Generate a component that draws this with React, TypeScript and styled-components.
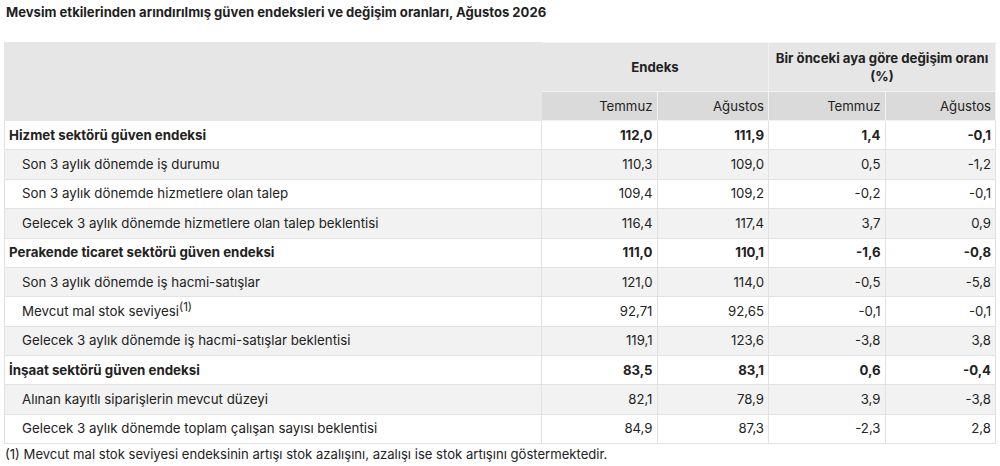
import styled, { createGlobalStyle } from 'styled-components';

type Row = {
  label: string;
  values: string[];
  bold?: boolean;
  note?: string;
};

const rows: Row[] = [
  { label: 'Hizmet sektörü güven endeksi', values: ['112,0', '111,9', '1,4', '-0,1'], bold: true },
  { label: 'Son 3 aylık dönemde iş durumu', values: ['110,3', '109,0', '0,5', '-1,2'] },
  { label: 'Son 3 aylık dönemde hizmetlere olan talep', values: ['109,4', '109,2', '-0,2', '-0,1'] },
  { label: 'Gelecek 3 aylık dönemde hizmetlere olan talep beklentisi', values: ['116,4', '117,4', '3,7', '0,9'] },
  { label: 'Perakende ticaret sektörü güven endeksi', values: ['111,0', '110,1', '-1,6', '-0,8'], bold: true },
  { label: 'Son 3 aylık dönemde iş hacmi-satışlar', values: ['121,0', '114,0', '-0,5', '-5,8'] },
  { label: 'Mevcut mal stok seviyesi', values: ['92,71', '92,65', '-0,1', '-0,1'], note: '(1)' },
  { label: 'Gelecek 3 aylık dönemde iş hacmi-satışlar beklentisi', values: ['119,1', '123,6', '-3,8', '3,8'] },
  { label: 'İnşaat sektörü güven endeksi', values: ['83,5', '83,1', '0,6', '-0,4'], bold: true },
  { label: 'Alınan kayıtlı siparişlerin mevcut düzeyi', values: ['82,1', '78,9', '3,9', '-3,8'] },
  { label: 'Gelecek 3 aylık dönemde toplam çalışan sayısı beklentisi', values: ['84,9', '87,3', '-2,3', '2,8'] },
];

const columnWidths = [537, 115.5, 111.5, 116.5, 110.5];

const GlobalStyle = createGlobalStyle`
  body {
    margin: 0;
    background: #ffffff;
    font-family: Inter, "Noto Sans", sans-serif;
    color: #222222;
  }
`;

const Page = styled.div`
  padding: 0 4px;
`;

const Title = styled.h1`
  margin: 0;
  padding: 2px 2px 0;
  font-size: 13.1px;
  line-height: 20px;
  font-weight: 700;
  color: #1f1f1f;
`;

const Table = styled.table`
  margin-top: 20px;
  width: 991px;
  table-layout: fixed;
  border-collapse: collapse;
  font-size: 13.2px;
  border: 1px solid #d6d6d6;
`;

const HeadCell = styled.th<{ $level: 1 | 2 }>`
  background: ${({ $level }) => ($level === 1 ? '#e6e6e6' : '#dadada')};
  border: 1px solid #f2f2f2;
  font-weight: ${({ $level }) => ($level === 1 ? 700 : 400)};
  text-align: ${({ $level }) => ($level === 1 ? 'center' : 'right')};
  line-height: 18px;
  padding: ${({ $level }) => ($level === 1 ? '6px 4px' : '5px 4px')};
  color: #222222;
`;

const CornerCell = styled.th`
  background: #e6e6e6;
  border: 1px solid #e6e6e6;
`;

const BodyRow = styled.tr`
  &:nth-child(even) {
    background: #f2f2f2;
  }
`;

const LabelCell = styled.td<{ $bold?: boolean }>`
  border: 1px solid #e2e2e2;
  padding: 4.7px 4px 4.7px ${({ $bold }) => ($bold ? '4px' : '17px')};
  line-height: 19px;
  font-size: 13.3px;
  font-weight: ${({ $bold }) => ($bold ? 700 : 400)};
  white-space: nowrap;
`;

const ValueCell = styled.td<{ $bold?: boolean }>`
  border: 1px solid #e2e2e2;
  padding: 4.7px 4px;
  line-height: 19px;
  text-align: right;
  font-weight: ${({ $bold }) => ($bold ? 700 : 400)};
`;

const Note = styled.sup`
  font-size: 11.5px;
  line-height: 0;
  vertical-align: 0.45em;
`;

const Footnote = styled.p`
  margin: 0;
  padding: 1px 1px 0;
  font-size: 13.1px;
  line-height: 18px;
`;

export default function App() {
  return (
    <Page>
      <GlobalStyle />
      <Title>Mevsim etkilerinden arındırılmış güven endeksleri ve değişim oranları, Ağustos 2026</Title>
      <Table>
        <colgroup>
          {columnWidths.map((width, i) => (
            <col key={i} style={{ width }} />
          ))}
        </colgroup>
        <thead>
          <tr>
            <CornerCell rowSpan={2} />
            <HeadCell $level={1} colSpan={2}>
              Endeks
            </HeadCell>
            <HeadCell $level={1} colSpan={2}>
              Bir önceki aya göre değişim oranı (%)
            </HeadCell>
          </tr>
          <tr>
            <HeadCell $level={2}>Temmuz</HeadCell>
            <HeadCell $level={2}>Ağustos</HeadCell>
            <HeadCell $level={2}>Temmuz</HeadCell>
            <HeadCell $level={2}>Ağustos</HeadCell>
          </tr>
        </thead>
        <tbody>
          {rows.map((row, index) => (
            <BodyRow key={index}>
              <LabelCell $bold={row.bold}>
                {row.label}
                {row.note && <Note>{row.note}</Note>}
              </LabelCell>
              {row.values.map((value, i) => (
                <ValueCell key={i} $bold={row.bold}>
                  {value}
                </ValueCell>
              ))}
            </BodyRow>
          ))}
        </tbody>
      </Table>
      <Footnote>
        (1) Mevcut mal stok seviyesi endeksinin artışı stok azalışını, azalışı ise stok artışını göstermektedir.
      </Footnote>
    </Page>
  );
}
